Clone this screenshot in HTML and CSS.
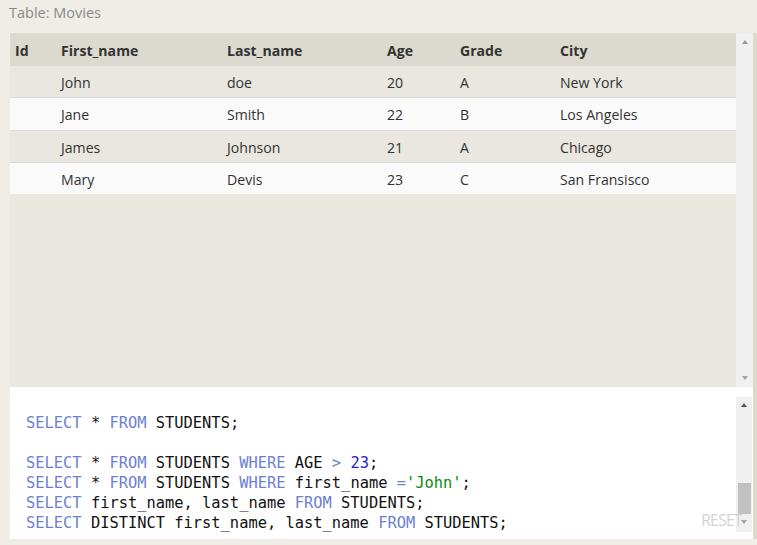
FILE: index.html
```html
<!DOCTYPE html>
<html>
<head>
<meta charset="utf-8">
<link rel="stylesheet" href="styles.css">
</head>
<body>
<div class="title">Table: Movies</div>
<div class="frame">
  <div class="result">
    <div class="table-view">
      <table class="grid">
        <colgroup>
          <col class="c-id"><col class="c-first"><col class="c-last"><col class="c-age"><col class="c-grade"><col>
        </colgroup>
        <thead>
          <tr><th>Id</th><th>First_name</th><th>Last_name</th><th>Age</th><th>Grade</th><th>City</th></tr>
        </thead>
        <tbody>
          <tr class="odd"><td></td><td>John</td><td>doe</td><td>20</td><td>A</td><td>New York</td></tr>
          <tr class="even"><td></td><td>Jane</td><td>Smith</td><td>22</td><td>B</td><td>Los Angeles</td></tr>
          <tr class="odd"><td></td><td>James</td><td>Johnson</td><td>21</td><td>A</td><td>Chicago</td></tr>
          <tr class="even"><td></td><td>Mary</td><td>Devis</td><td>23</td><td>C</td><td>San Fransisco</td></tr>
        </tbody>
      </table>
    </div>
    <div class="scrollbar sb-table">
      <span class="arrow up light"></span>
      <span class="track"></span>
      <span class="arrow down light"></span>
    </div>
  </div>
  <div class="editor">
    <pre class="code"><span class="kw">SELECT</span> * <span class="kw">FROM</span> STUDENTS;

<span class="kw">SELECT</span> * <span class="kw">FROM</span> STUDENTS <span class="kw">WHERE</span> AGE <span class="op">&gt;</span> <span class="num">23</span>;
<span class="kw">SELECT</span> * <span class="kw">FROM</span> STUDENTS <span class="kw">WHERE</span> first_name <span class="op">=</span><span class="str">'John'</span>;
<span class="kw">SELECT</span> first_name, last_name <span class="kw">FROM</span> STUDENTS;
<span class="kw">SELECT</span> DISTINCT first_name, last_name <span class="kw">FROM</span> STUDENTS;</pre>
    <div class="scrollbar sb-code">
      <span class="arrow up dark"></span>
      <span class="track"><span class="thumb"></span></span>
      <span class="arrow down light"></span>
    </div>
    <button class="reset">RESET</button>
  </div>
</div>
</body>
</html>
```

FILE: styles.css
```css
html, body {
  margin: 0;
  padding: 0;
  background: #f0ede6;
  height: 100%;
  overflow: hidden;
}

body {
  font-family: "Open Sans", "Noto Sans", sans-serif;
  color: #333;
}

.title {
  height: 33px;
  line-height: 26px;
  padding-left: 9px;
  font-size: 14.5px;
  color: #8a8a8a;
}

.frame {
  margin-left: 10px;
  width: 743px;
  border-right: 4px solid #dcd9cf;
  display: flex;
  flex-direction: column;
}

.result {
  height: 354px;
  display: flex;
  background: #e9e7e0;
}

.table-view {
  flex: 1;
}

.grid {
  width: 726px;
  table-layout: fixed;
  border-collapse: collapse;
  font-size: 14.1px;
}

.c-id { width: 46px; }
.c-first { width: 166px; }
.c-last { width: 160px; }
.c-age { width: 73px; }
.c-grade { width: 100px; }

.grid th,
.grid td {
  text-align: left;
  padding: 2px 0 0 5px;
  white-space: nowrap;
}

.grid th {
  height: 31px;
  background: #dcdad0;
  font-weight: 700;
  color: #333;
}

.grid td {
  height: 29.25px;
  color: #333;
}

.grid tbody tr + tr td {
  border-top: 1px solid #dcdcdc;
}

.grid .odd { background: #e9e7e0; }
.grid .even { background: #fafafa; }

.scrollbar {
  width: 17px;
  background: #f0f0f0;
  display: flex;
  flex-direction: column;
  align-items: center;
}

.scrollbar .track {
  flex: 1;
  width: 100%;
  display: flex;
  flex-direction: column;
  justify-content: flex-end;
}

.arrow {
  width: 0;
  height: 0;
  border-left: 3.5px solid transparent;
  border-right: 3.5px solid transparent;
}

.arrow.up { border-bottom: 4px solid; margin: 7px 0 6px; }
.arrow.down { border-top: 4px solid; margin: 6px 0 7px; }
.arrow.light { border-bottom-color: #a3a3a3; border-top-color: #a3a3a3; }
.arrow.dark { border-bottom-color: #505050; }
.sb-table .arrow.up { border-bottom-color: #999; }

.editor {
  position: relative;
  height: 152px;
  background: #fff;
  display: flex;
}

.code {
  flex: 1;
  margin: 0;
  padding: 26px 0 0 16px;
  font-family: "DejaVu Sans Mono", "Liberation Mono", monospace;
  font-size: 15.4px;
  line-height: 20px;
  color: #111;
}

.kw { color: #6c80d2; }
.op { color: #6c80d2; }
.num { color: #1c1cd0; }
.str { color: #0c8a0c; }

.sb-code {
  width: 16px;
  margin: 10px 1px 7px 0;
}

.sb-code .arrow.up { margin: 6px 0 0; }
.sb-code .arrow.down { margin: 6px 0 8px; }

.sb-code .thumb {
  align-self: center;
  width: 13px;
  height: 31px;
  background: #c1c1c1;
}

.reset {
  position: absolute;
  right: 11px;
  bottom: 9px;
  border: 0;
  padding: 0;
  background: transparent;
  font-family: "Open Sans", "Noto Sans", sans-serif;
  font-size: 15.5px;
  letter-spacing: -0.6px;
  color: #d2d2d2;
  line-height: 20px;
}
```
